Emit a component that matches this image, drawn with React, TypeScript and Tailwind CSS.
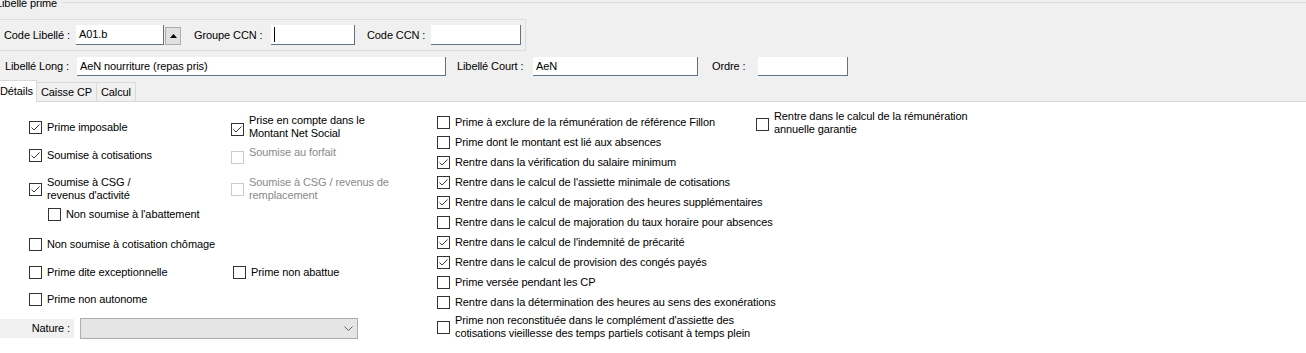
import type { ReactNode } from "react";

interface CheckProps {
    checked?: boolean,
    disabled?: boolean,
    children: ReactNode,
    boxClass?: string,
    textClass?: string,
    className?: string
}

function Box({ checked, disabled, className }: { checked?: boolean, disabled?: boolean, className?: string }) {
    return (
        <span className={"relative w-[13px] h-[13px] shrink-0 border bg-white " + (disabled ? "border-[#cccccc] " : "border-[#333333] ") + (className ?? "")}>
            { checked &&
                <svg viewBox="0 0 11 11" className="absolute inset-0 w-[11px] h-[11px]">
                    <polyline points="1.5,5.5 4,8 9.5,2.5" fill="none" stroke="#3c3c3c" strokeWidth="1" />
                </svg>
            }
        </span>
    );
}

function Check({ checked, disabled, children, boxClass, textClass, className }: CheckProps) {
    return (
        <div className={"flex items-center gap-[5px] " + (className ?? "")}>
            <Box checked={checked} disabled={disabled} className={boxClass} />
            <span className={"whitespace-nowrap " + (disabled ? "text-[#8a8a8a] " : "") + (textClass ?? "")}>{children}</span>
        </div>
    );
}

function Field({ width, value, caret }: { width: string, value?: string, caret?: boolean }) {
    return (
        <div className={"h-full bg-white border-r border-b border-[#5f7286] flex items-center pl-[3px] " + width}>
            { caret && <span className="w-px h-[15px] bg-black" /> }
            { value }
        </div>
    );
}

const right = [
    { label: "Prime à exclure de la rémunération de référence Fillon", checked: false },
    { label: "Prime dont le montant est lié aux absences", checked: false },
    { label: "Rentre dans la vérification du salaire minimum", checked: true },
    { label: "Rentre dans le calcul de l'assiette minimale de cotisations", checked: true },
    { label: "Rentre dans le calcul de majoration des heures supplémentaires", checked: true },
    { label: "Rentre dans le calcul de majoration du taux horaire pour absences", checked: false },
    { label: "Rentre dans le calcul de l'indemnité de précarité", checked: true },
    { label: "Rentre dans le calcul de provision des congés payés", checked: true },
    { label: "Prime versée pendant les CP", checked: false },
    { label: "Rentre dans la détermination des heures au sens des exonérations", checked: false },
];

export default function App() {
    return (
        <div className="w-[1306px] h-[353px] overflow-hidden bg-white text-black font-['Liberation_Sans',Arial,sans-serif] text-[11px] leading-[13px] tracking-[-0.1px]">

            {/* en-tête : groupe Libellé prime */}
            <div className="bg-[#f0f0f0] h-[102px] flex flex-col">
                <div className="h-[19px] flex items-start">
                    <span className="-ml-[4px] -mt-[4px] leading-[14px] pr-[5px]">Libellé prime</span>
                    <div className="flex-1 mt-[2px] border-t border-[#dcdcdc]" />
                </div>

                <div className="h-[32px] w-[527px] -ml-px border border-[#dcdcdc] flex items-center">
                    <div className="h-[20px] flex items-center">
                        <span className="w-[76px] pl-[4px]">Code Libellé :</span>
                        <Field width="w-[88px]" value="A01.b" />
                        <div className="ml-px mt-[2px] w-[16px] h-[18px] bg-[#e1e1e1] border border-[#adadad] flex items-center justify-center">
                            <svg viewBox="0 0 7 4" className="w-[7px] h-[4px]"><polygon points="0,4 3.5,0 7,4" fill="#000" /></svg>
                        </div>
                        <span className="ml-[13px] w-[77px]">Groupe CCN :</span>
                        <Field width="w-[84px]" caret />
                        <span className="ml-[12px] w-[64px]">Code CCN :</span>
                        <Field width="w-[90px]" />
                    </div>
                </div>

                <div className="mt-[6px] h-[19px] flex items-center">
                    <span className="w-[77px] pl-[5px]">Libellé Long :</span>
                    <Field width="w-[369px]" value="AeN nourriture (repas pris)" />
                    <span className="ml-[11px] w-[76px]">Libellé Court :</span>
                    <Field width="w-[165px]" value="AeN" />
                    <span className="ml-[14px] w-[46px]">Ordre :</span>
                    <Field width="w-[90px]" />
                </div>

                {/* onglets */}
                <div className="h-[26px] flex items-end">
                    <div className="-ml-[2px] w-[39px] h-[22px] bg-white border-t border-l border-r border-[#d9d9d9] flex items-center pl-px">Détails</div>
                    <div className="w-[60px] h-[20px] border-t border-r border-b border-[#d9d9d9] flex items-center pl-[4px]">Caisse CP</div>
                    <div className="w-[39px] h-[20px] border-t border-r border-b border-[#d9d9d9] flex items-center pl-[4px]">Calcul</div>
                    <div className="flex-1 h-full border-b border-[#d9d9d9]" />
                </div>
            </div>

            {/* onglet Détails */}
            <div className="flex">
                <div className="w-[437px] shrink-0 flex flex-col">
                    <div className="mt-[12px] h-[26px] flex items-center">
                        <Check checked className="ml-[29px] w-[202px]">Prime imposable</Check>
                        <Check checked boxClass="mt-[4px]">Prise en compte dans le<br />Montant Net Social</Check>
                    </div>
                    <div className="mt-[8px] h-[15px] flex items-center">
                        <Check checked className="ml-[29px] w-[202px]">Soumise à cotisations</Check>
                        <Check disabled className="items-start" boxClass="mt-[3px]" textClass="-mt-[2px]">Soumise au forfait</Check>
                    </div>
                    <div className="mt-[13px] h-[26px] flex items-center">
                        <Check checked className="ml-[29px] w-[202px]">Soumise à CSG /<br />revenus d'activité</Check>
                        <Check disabled>Soumise à CSG / revenus de<br />remplacement</Check>
                    </div>
                    <div className="mt-[5px] h-[14px] flex items-center">
                        <Check className="ml-[48px]">Non soumise à l'abattement</Check>
                    </div>
                    <div className="mt-[16px] h-[14px] flex items-center">
                        <Check className="ml-[29px]">Non soumise à cotisation chômage</Check>
                    </div>
                    <div className="mt-[14px] h-[14px] flex items-center">
                        <Check className="ml-[29px] w-[204px]">Prime dite exceptionnelle</Check>
                        <Check>Prime non abattue</Check>
                    </div>
                    <div className="mt-[13px] h-[14px] flex items-center">
                        <Check className="ml-[29px]">Prime non autonome</Check>
                    </div>
                    <div className="mt-[12px] h-[21px] flex items-center">
                        <div className="w-[74px] h-[19px] bg-[#f0f0f0] flex items-center justify-end pr-[4px]">Nature :</div>
                        <div className="ml-[6px] w-[278px] h-[21px] bg-[#e5e5e5] border border-[#adadad] flex items-center justify-end pr-[4px]">
                            <svg viewBox="0 0 9 5" className="w-[9px] h-[5px]"><polyline points="0.5,0.5 4.5,4.5 8.5,0.5" fill="none" stroke="#606060" strokeWidth="1" /></svg>
                        </div>
                    </div>
                </div>

                <div className="w-[319px] shrink-0 flex flex-col mt-[10px]">
                    { right.map(item =>
                        <Check key={item.label} checked={item.checked} className="h-[20px]">{item.label}</Check>
                    ) }
                    <Check className="mt-[2px] h-[26px]">Prime non reconstituée dans le complément d'assiette des<br />cotisations vieillesse des temps partiels cotisant à temps plein</Check>
                </div>

                <div className="flex flex-col mt-[8px]">
                    <Check boxClass="mt-[2px]">Rentre dans le calcul de la rémunération<br />annuelle garantie</Check>
                </div>
            </div>
        </div>
    );
}
